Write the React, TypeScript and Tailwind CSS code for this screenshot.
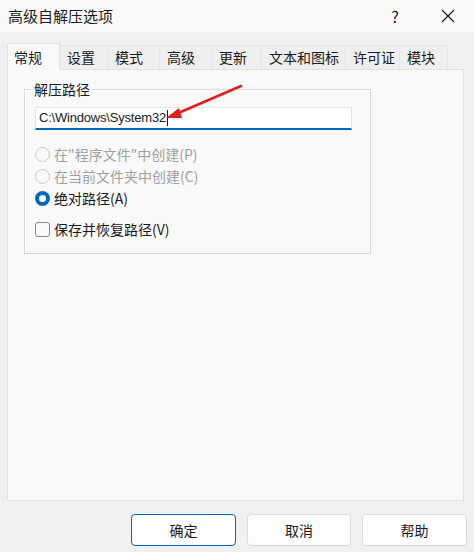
const tabs = ["设置", "模式", "高级", "更新", "文本和图标", "许可证", "模块"];
const tabWidths = ["w-[48px]", "w-[52px]", "w-[52px]", "w-[50px]", "w-[84px]", "w-[54px]", "w-[48px]"];

function Radio({ label, checked, disabled }: { label: string; checked?: boolean; disabled?: boolean }) {
  return (
    <div className="flex items-center h-[22px]">
      {checked ? (
        <span className="w-[15px] h-[15px] rounded-full bg-[#0067c0] flex items-center justify-center">
          <span className="w-[7px] h-[7px] rounded-full bg-white" />
        </span>
      ) : (
        <span className="w-[15px] h-[15px] rounded-full border border-[#c9c9c9] bg-[#f9f9f9]" />
      )}
      <span className={`ml-[4px] text-[14px] ${disabled ? "text-[#a0a0a0]" : "text-[#1a1a1a]"}`}>{label}</span>
    </div>
  );
}

export default function App() {
  return (
    <div
      className="relative w-[474px] h-[552px] bg-[#f0f0f0] flex flex-col text-[#1a1a1a] overflow-hidden"
      style={{ fontFamily: '"Noto Sans CJK SC", "Noto Sans", sans-serif' }}
    >
      {/* title bar */}
      <div className="h-[32px] bg-[#f9f9f9] flex items-center pl-[8px] shrink-0">
        <span className="text-[15px] flex-1">高级自解压选项</span>
        <span className="text-[16px] w-[20px] text-center mr-[36px]">?</span>
        <svg width="14" height="14" viewBox="0 0 14 14" className="mr-[19px]">
          <path d="M1 1L13 13M13 1L1 13" stroke="#1a1a1a" strokeWidth="1.2" />
        </svg>
      </div>

      {/* body */}
      <div className="flex flex-col px-[7px] pt-[10px]">
        <div className="flex items-end h-[27px]">
          <div className="w-[53px] h-[27px] bg-[#f9f9f9] border border-b-0 border-[#e2e2e2] flex items-center pl-[6px] text-[14px] relative z-10 -mb-px">
            常规
          </div>
          {tabs.map((t, i) => (
            <div
              key={t}
              className={`${tabWidths[i]} h-[24px] bg-[#efefef] border-r border-t border-[#e6e6e6] flex items-center pl-[7px] text-[14px] shrink-0`}
            >
              {t}
            </div>
          ))}
        </div>

        <div className="w-[457px] h-[432px] bg-[#f9f9f9] border border-[#e2e2e2] pt-[9px] pl-[16px]">
          <fieldset className="w-[347px] h-[175px] border border-[#dadada] shadow-[inset_1px_1px_0_#ffffff] px-[10px]">
            <legend className="text-[14px] px-[1px] ml-[-2px]">解压路径</legend>
            <div
              className="mt-[7px] w-[317px] h-[23px] bg-white border border-[#e6e6e6] border-b-2 border-b-[#0067c0] flex items-center pl-[3px] text-[13px] tracking-[-0.2px]"
              style={{ fontFamily: '"Liberation Sans", Arial, sans-serif' }}
            >
              C:\Windows\System32
              <span className="w-px h-[16px] bg-[#1a1a1a] ml-[1px]" />
            </div>
            <div className="mt-[13px] flex flex-col">
              <Radio label={'在"程序文件"中创建(P)'} disabled />
              <Radio label="在当前文件夹中创建(C)" disabled />
              <Radio label="绝对路径(A)" checked />
            </div>
            <div className="flex items-center h-[22px] mt-[9px]">
              <span className="w-[15px] h-[15px] rounded-[3px] border border-[#8a8a8a] bg-[#f9f9f9]" />
              <span className="ml-[4px] text-[14px]">保存并恢复路径(V)</span>
            </div>
          </fieldset>
        </div>

        <div className="flex justify-end gap-[11px] mt-[13px] pr-0">
          <button className="w-[105px] h-[32px] rounded-[4px] bg-[#fdfdfd] border border-[#0067c0] text-[14px]">确定</button>
          <button className="w-[104px] h-[32px] rounded-[4px] bg-[#fdfdfd] border border-[#dcdcdc] text-[14px]">取消</button>
          <button className="w-[105px] h-[32px] rounded-[4px] bg-[#fdfdfd] border border-[#dcdcdc] text-[14px]">帮助</button>
        </div>
      </div>

      {/* annotation arrow */}
      <svg className="absolute left-0 top-0 pointer-events-none" width="474" height="552">
        <line x1="241" y1="86" x2="176" y2="114" stroke="#e0201c" strokeWidth="2.5" strokeLinecap="round" />
        <polygon points="166,118 179,108 182,118" fill="#e0201c" />
      </svg>
    </div>
  );
}
